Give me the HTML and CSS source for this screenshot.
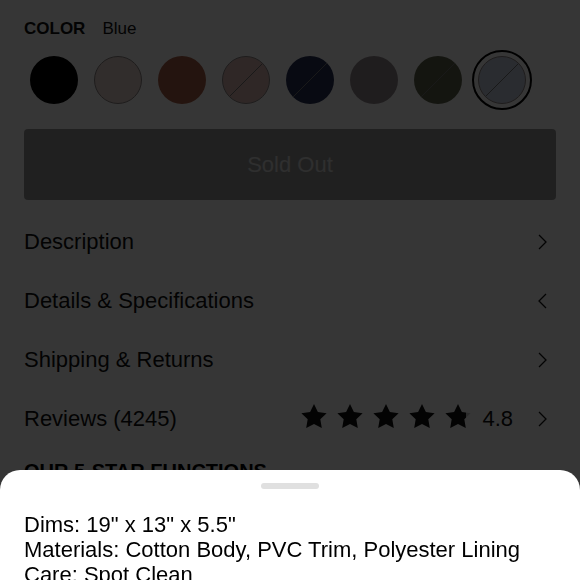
FILE: index.html
```html
<!DOCTYPE html>
<html lang="en">
<head>
  <meta charset="UTF-8">
  <meta name="viewport" content="width=device-width, initial-scale=1.0">
  <title>Product - Details</title>
  <link rel="stylesheet" href="styles.css">
</head>
<body>
  <div class="product">
    <div class="color-label">
      <span class="color-title">COLOR</span>
      <span class="color-name">Blue</span>
    </div>

    <div class="swatches">
      <button class="swatch"><span class="dot" style="background-color: #000"></span></button>
      <button class="swatch"><span class="dot bordered" style="background-color: #e5d2cd"></span></button>
      <button class="swatch"><span class="dot" style="background-color: #ab5f47"></span></button>
      <button class="swatch"><span class="dot bordered slashed" style="background-color: #dbbab5"></span></button>
      <button class="swatch"><span class="dot slashed" style="background-color: #263056"></span></button>
      <button class="swatch"><span class="dot" style="background-color: #948a8f"></span></button>
      <button class="swatch"><span class="dot slashed" style="background-color: #5f644c"></span></button>
      <button class="swatch selected"><span class="dot bordered slashed" style="background-color: #c8cde0"></span></button>
    </div>

    <button class="btn-sold-out" disabled>Sold Out</button>

    <ul class="accordion">
      <li class="accordion-row">
        <span>Description</span>
        <svg class="chevron" viewBox="0 0 12 18"><path d="M3 2l7 7-7 7"></path></svg>
      </li>
      <li class="accordion-row">
        <span>Details &amp; Specifications</span>
        <svg class="chevron" viewBox="0 0 12 18"><path d="M10 2L3 9l7 7"></path></svg>
      </li>
      <li class="accordion-row">
        <span>Shipping &amp; Returns</span>
        <svg class="chevron" viewBox="0 0 12 18"><path d="M3 2l7 7-7 7"></path></svg>
      </li>
      <li class="accordion-row">
        <span>Reviews (4245)</span>
        <div class="rating">
          <div class="stars">
            <svg class="star" viewBox="2 2 20 19"><path d="M12 2l3.09 6.26L22 9.27l-5 4.87 1.18 6.88L12 17.77l-6.18 3.25L7 14.14 2 9.27l6.91-1.01z"></path></svg>
            <svg class="star" viewBox="2 2 20 19"><path d="M12 2l3.09 6.26L22 9.27l-5 4.87 1.18 6.88L12 17.77l-6.18 3.25L7 14.14 2 9.27l6.91-1.01z"></path></svg>
            <svg class="star" viewBox="2 2 20 19"><path d="M12 2l3.09 6.26L22 9.27l-5 4.87 1.18 6.88L12 17.77l-6.18 3.25L7 14.14 2 9.27l6.91-1.01z"></path></svg>
            <svg class="star" viewBox="2 2 20 19"><path d="M12 2l3.09 6.26L22 9.27l-5 4.87 1.18 6.88L12 17.77l-6.18 3.25L7 14.14 2 9.27l6.91-1.01z"></path></svg>
            <svg class="star" viewBox="2 2 20 19">
              <defs>
                <linearGradient id="partial">
                  <stop offset="80%" stop-color="#111"></stop>
                  <stop offset="80%" stop-color="#ccc"></stop>
                </linearGradient>
              </defs>
              <path fill="url(#partial)" d="M12 2l3.09 6.26L22 9.27l-5 4.87 1.18 6.88L12 17.77l-6.18 3.25L7 14.14 2 9.27l6.91-1.01z"></path>
            </svg>
          </div>
          <span class="rating-value">4.8</span>
          <svg class="chevron" viewBox="0 0 12 18"><path d="M3 2l7 7-7 7"></path></svg>
        </div>
      </li>
    </ul>

    <h2 class="section-title">OUR 5-STAR FUNCTIONS</h2>
  </div>

  <!-- Details sheet is open -->
  <div class="backdrop"></div>
  <div class="sheet">
    <div class="sheet-handle"></div>
    <div class="sheet-body">
      <p>Dims: 19" x 13" x 5.5"</p>
      <p>Materials: Cotton Body, PVC Trim, Polyester Lining</p>
      <p>Care: Spot Clean</p>
    </div>
  </div>
</body>
</html>
```

FILE: styles.css
```css
:root {
  --text-color: #111;
  --border-radius: 4px;
}

* {
  margin: 0;
  padding: 0;
  box-sizing: border-box;
}

body {
  font-family: "Liberation Sans", Arial, Helvetica, sans-serif;
  background-color: #fff;
  color: var(--text-color);
  height: 580px;
  overflow: hidden;
}

.product {
  padding: 19px 24px 0;
}

.color-label {
  display: flex;
  gap: 17px;
  font-size: 17px;
  line-height: 20px;
}

.color-title {
  font-weight: 700;
}

.swatches {
  display: flex;
  gap: 4px;
  margin-top: 11px;
}

.swatch {
  width: 60px;
  height: 60px;
  border: 2px solid transparent;
  border-radius: 50%;
  background: none;
  display: flex;
  align-items: center;
  justify-content: center;
}

.swatch.selected {
  border-color: #000;
}

.dot {
  width: 48px;
  height: 48px;
  border-radius: 50%;
  flex-shrink: 0;
}

.dot.bordered {
  border: 1px solid #8f8787;
}

.dot.slashed {
  background-image: linear-gradient(135deg, transparent calc(50% - 0.7px), #777 calc(50% - 0.7px), #777 calc(50% + 0.7px), transparent calc(50% + 0.7px));
}

.btn-sold-out {
  display: block;
  width: 100%;
  height: 71px;
  margin-top: 19px;
  border: none;
  border-radius: var(--border-radius);
  background-color: #999;
  color: #dcdcdc;
  font-family: inherit;
  font-size: 22px;
}

.accordion {
  list-style: none;
  margin-top: 12px;
}

.accordion-row {
  display: flex;
  align-items: center;
  justify-content: space-between;
  height: 59px;
  font-size: 22px;
}

.chevron {
  width: 12px;
  height: 18px;
  margin-right: 8px;
  fill: none;
  stroke: var(--text-color);
  stroke-width: 1.3;
}

.rating {
  display: flex;
  align-items: center;
}

.stars {
  display: flex;
  gap: 10px;
  margin-top: -5px;
}

.star {
  width: 26px;
  height: 24px;
  fill: var(--text-color);
}

.rating-value {
  margin: 0 23px 0 11px;
}

.section-title {
  margin-top: 11px;
  font-size: 20px;
  line-height: 24px;
  font-weight: 900;
  color: #000;
}

.backdrop {
  position: fixed;
  inset: 0;
  background-color: rgba(0, 0, 0, 0.79);
}

.sheet {
  position: fixed;
  top: 470px;
  left: 0;
  right: 0;
  bottom: 0;
  padding: 13px 24px 0;
  background-color: #fff;
  border-radius: 20px 20px 0 0;
  color: #000;
}

.sheet-handle {
  width: 58px;
  height: 6px;
  margin: 0 auto;
  border-radius: 3px;
  background-color: #e0e0e0;
}

.sheet-body {
  margin-top: 23px;
  font-size: 22px;
  line-height: 25px;
}
```
